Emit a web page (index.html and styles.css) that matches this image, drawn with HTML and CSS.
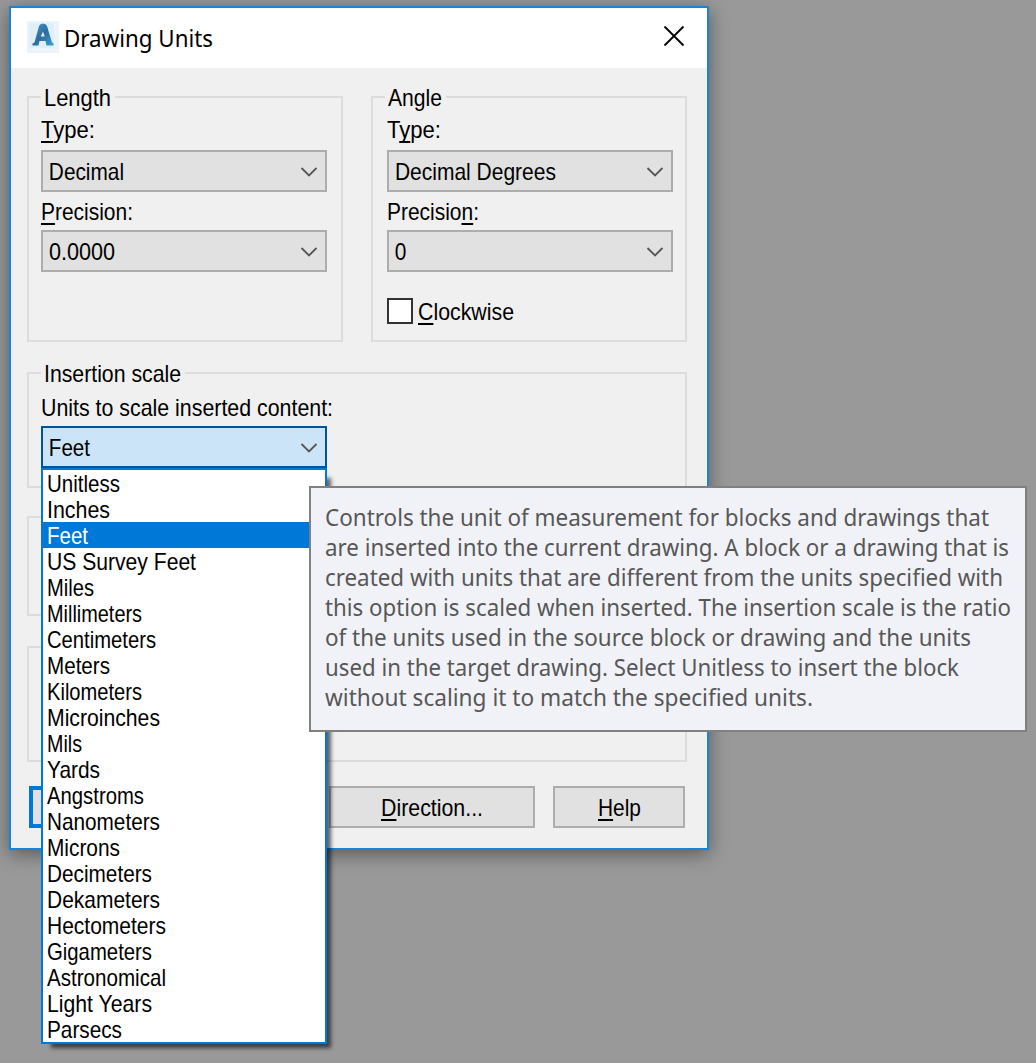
FILE: index.html
```html
<!DOCTYPE html>
<html lang="en">
<head>
<meta charset="utf-8">
<title>Drawing Units</title>
<link rel="stylesheet" href="styles.css">
</head>
<body>
<div class="dialog">
  <header class="titlebar">
    <svg class="logo" width="32" height="32" viewBox="0 0 32 32">
      <defs><linearGradient id="g" x1="0" y1="0" x2="1" y2="1"><stop offset="0" stop-color="#4a9bd0"/><stop offset=".5" stop-color="#2b6d9d"/><stop offset="1" stop-color="#3a9fd8"/></linearGradient></defs>
      <rect width="32" height="32" fill="#eaf4fa"/>
      <rect x="2" y="2" width="25" height="25" fill="#dfeef7"/>
      <path fill="url(#g)" fill-rule="evenodd" d="M5.500 24.500V22.500L7.500 21.500 12 5Q13 2.500 16 2.500T20 5L25 21.500 26.500 22.500V24.500H19.500L18.500 20H12.500L11.500 24.500ZM13.700 15.500H17.800L16 10.500Z"/>
    </svg>
    <h1 class="title"><span class="t" data-w="149">Drawing Units</span></h1>
    <svg class="close" width="22" height="22" viewBox="0 0 22 22"><path d="M1.500 1.500 20.500 20.500M20.500 1.500 1.500 20.500"/></svg>
  </header>
  <main class="content">
    <div class="columns">
      <section class="group upper">
        <div class="legend"><span class="t" data-w="67">Length</span></div>
        <div class="label first"><span class="t" data-w="54"><u>T</u>ype:</span></div>
        <div class="combo"><span class="t" data-w="76">Decimal</span><svg class="chev" width="18" height="12"><path d="M1.500 2 9 9.500 16.500 2"/></svg></div>
        <div class="label second"><span class="t" data-w="92"><u>P</u>recision:</span></div>
        <div class="combo"><span class="t" data-w="67">0.0000</span><svg class="chev" width="18" height="12"><path d="M1.500 2 9 9.500 16.500 2"/></svg></div>
      </section>
      <section class="group upper angle">
        <div class="legend"><span class="t" data-w="54">Angle</span></div>
        <div class="label first"><span class="t" data-w="54">T<u>y</u>pe:</span></div>
        <div class="combo"><span class="t" data-w="162">Decimal Degrees</span><svg class="chev" width="18" height="12"><path d="M1.500 2 9 9.500 16.500 2"/></svg></div>
        <div class="label second"><span class="t" data-w="92">Precisio<u>n</u>:</span></div>
        <div class="combo"><span class="t" data-w="12.5">0</span><svg class="chev" width="18" height="12"><path d="M1.500 2 9 9.500 16.500 2"/></svg></div>
        <div class="check"><i class="box"></i><span class="t" data-w="96"><u>C</u>lockwise</span></div>
      </section>
    </div>
    <section class="group insertion">
      <div class="legend"><span class="t" data-w="137">Insertion scale</span></div>
      <div class="label units"><span class="t" data-w="292">Units to scale inserted content:</span></div>
      <div class="combo open"><span class="t" data-w="42">Feet</span><svg class="chev" width="18" height="12"><path d="M1.500 2 9 9.500 16.500 2"/></svg>
        <ul class="list">
          <li><span class="t" data-w="73">Unitless</span></li>
          <li><span class="t" data-w="63">Inches</span></li>
          <li class="selected"><span class="t" data-w="41">Feet</span></li>
          <li><span class="t" data-w="149">US Survey Feet</span></li>
          <li><span class="t" data-w="47">Miles</span></li>
          <li><span class="t" data-w="95">Millimeters</span></li>
          <li><span class="t" data-w="109">Centimeters</span></li>
          <li><span class="t" data-w="63">Meters</span></li>
          <li><span class="t" data-w="95">Kilometers</span></li>
          <li><span class="t" data-w="113">Microinches</span></li>
          <li><span class="t" data-w="35">Mils</span></li>
          <li><span class="t" data-w="53">Yards</span></li>
          <li><span class="t" data-w="97">Angstroms</span></li>
          <li><span class="t" data-w="113">Nanometers</span></li>
          <li><span class="t" data-w="73">Microns</span></li>
          <li><span class="t" data-w="105">Decimeters</span></li>
          <li><span class="t" data-w="113">Dekameters</span></li>
          <li><span class="t" data-w="119">Hectometers</span></li>
          <li><span class="t" data-w="105">Gigameters</span></li>
          <li><span class="t" data-w="119">Astronomical</span></li>
          <li><span class="t" data-w="105">Light Years</span></li>
          <li><span class="t" data-w="75">Parsecs</span></li>
        </ul>
      </div>
    </section>
    <section class="group sample"></section>
    <section class="group lighting"></section>
    <footer class="actions">
      <div class="button primary"></div>
      <div class="button direction"><span class="t" data-w="102"><u>D</u>irection...</span></div>
      <div class="button help"><span class="t" data-w="43"><u>H</u>elp</span></div>
    </footer>
  </main>
</div>
<div class="tooltip">
  <div><span class="t" data-w="664">Controls the unit of measurement for blocks and drawings that</span></div>
  <div><span class="t" data-w="684">are inserted into the current drawing. A block or a drawing that is</span></div>
  <div><span class="t" data-w="678">created with units that are different from the units specified with</span></div>
  <div><span class="t" data-w="686">this option is scaled when inserted. The insertion scale is the ratio</span></div>
  <div><span class="t" data-w="646">of the units used in the source block or drawing and the units</span></div>
  <div><span class="t" data-w="634">used in the target drawing. Select Unitless to insert the block</span></div>
  <div><span class="t" data-w="488">without scaling it to match the specified units.</span></div>
</div>
<script src="script.js"></script>
</body>
</html>
```
FILE: styles.css
```css
* { box-sizing: border-box; }
body {
  margin: 0;
  height: 1063px;
  position: relative;
  overflow: hidden;
  background: #999;
  color: #000;
  font: 24px/28px "Liberation Sans", Arial, sans-serif;
}
.t {
  display: inline-block;
  white-space: pre;
  transform-origin: 0 50%;
}
u {
  text-decoration: underline;
  text-decoration-thickness: 2px;
  text-underline-offset: 3px;
  text-decoration-skip-ink: none;
}
.dialog {
  position: absolute;
  left: 9px;
  top: 6px;
  width: 700px;
  height: 844px;
  border: 2px solid #1883d7;
  background: #f0f0f0;
  box-shadow: 0 4px 18px rgba(0, 0, 0, .42);
}
.titlebar {
  display: flex;
  height: 60px;
  padding: 13px 22px 0 16px;
  background: #fff;
}
.title {
  flex: 1;
  margin: 0;
  padding: 1px 0 0 5px;
  font: 24px/32px "Noto Sans", "Open Sans", sans-serif;
}
.close { margin-top: 4px; fill: none; stroke: #000; stroke-width: 1.8; }
.content { padding: 28px 20px 0 16px; }
.columns { display: flex; gap: 28px; }
.group {
  border: 2px solid #dcdcdc;
  padding: 0 14px 0 12px;
}
.upper { width: 316px; height: 246px; }
.angle { padding: 0 12px 0 14px; }
.legend {
  width: max-content;
  height: 28px;
  margin-top: -14px;
  padding: 0 4px 0 3px;
  background: #f0f0f0;
}
.angle .legend { margin-left: -2px; }
.label { height: 28px; }
.first { margin: 4px 0 6px; }
.second { margin: 6px 0 4px; }
.combo {
  position: relative;
  display: flex;
  justify-content: space-between;
  align-items: center;
  width: 286px;
  height: 42px;
  padding: 1px 7px 0 5px;
  border: 2px solid #adadad;
  background: #e1e1e1;
}
.combo > .t { padding-left: 1px; }
.chev { fill: none; stroke: #555; stroke-width: 1.8; }
.check { display: flex; gap: 5px; margin-top: 26px; }
.box { width: 26px; height: 26px; border: 2px solid #333; background: #fff; }
.insertion { height: 116px; margin-top: 30px; }
.units { margin: 6px 0 4px; }
.open { border-color: #005499; background: #cce4f7; }
.list {
  position: absolute;
  z-index: 1;
  left: -2px;
  top: 40px;
  width: 286px;
  margin: 0;
  padding: 0;
  border: 2px solid #0078d7;
  background: #fff;
  box-shadow: 7px 7px 4px -3px rgba(0, 0, 0, .6);
  list-style: none;
}
.list li { height: 26px; padding-left: 4px; line-height: 28px; }
.selected { background: #0078d7; color: #fff; }
.sample { height: 100px; margin-top: 28px; }
.lighting { height: 116px; margin-top: 30px; }
.actions { display: flex; gap: 18px; margin: 24px 2px 0; }
.button {
  display: flex;
  justify-content: center;
  align-items: center;
  height: 42px;
  padding-top: 2px;
  border: 2px solid #adadad;
  background: #e1e1e1;
}
.primary { width: 282px; border: 4px solid #0078d7; }
.direction { width: 206px; }
.help { width: 132px; }
.tooltip {
  position: absolute;
  z-index: 2;
  left: 309px;
  top: 486px;
  width: 718px;
  height: 246px;
  padding: 14px 0 0 14px;
  border: 2px solid #808080;
  background: #f1f2f7;
  color: #575757;
  font: 24px/30px "Noto Sans", "Open Sans", sans-serif;
}
.tooltip div { height: 30px; }
```
FILE: script.js
```js
// Condense each label to its set width.
document.querySelectorAll('.t').forEach(function (el) {
  var natural = el.getBoundingClientRect().width;
  var width = Number(el.dataset.w);
  el.style.transform = 'scaleX(' + width / natural + ')';
  el.style.marginRight = (width - natural) + 'px';
});
```
